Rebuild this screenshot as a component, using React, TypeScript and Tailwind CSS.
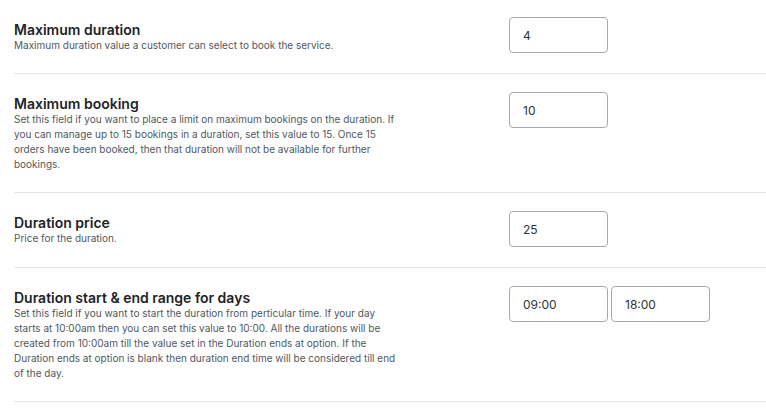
import React from "react";

type Field = {
  title: string;
  desc: string;
  values: string[];
};

const fields: Field[] = [
  {
    title: "Maximum duration",
    desc: "Maximum duration value a customer can select to book the service.",
    values: ["4"],
  },
  {
    title: "Maximum booking",
    desc: "Set this field if you want to place a limit on maximum bookings on the duration. If you can manage up to 15 bookings in a duration, set this value to 15. Once 15 orders have been booked, then that duration will not be available for further bookings.",
    values: ["10"],
  },
  {
    title: "Duration price",
    desc: "Price for the duration.",
    values: ["25"],
  },
  {
    title: "Duration start & end range for days",
    desc: "Set this field if you want to start the duration from perticular time. If your day starts at 10:00am then you can set this value to 10:00. All the durations will be created from 10:00am till the value set in the Duration ends at option. If the Duration ends at option is blank then duration end time will be considered till end of the day.",
    values: ["09:00", "18:00"],
  },
];

export default function App() {
  return (
    <div className="bg-white min-h-screen pl-[14px] font-['Inter',sans-serif] antialiased">
      {fields.map((f, i) => (
        <div
          key={f.title}
          className={`flex border-b border-[#e5e5e5] pb-[20px] ${i === 0 ? "pt-[17px]" : "pt-[18px]"}`}
        >
          {/* Label */}
          <div className={`w-[495px] shrink-0 ${i === 0 ? "pt-[4px]" : "pt-[3px]"}`}>
            <h2 className="text-[14px] leading-[18px] font-semibold text-[#1d2327]">{f.title}</h2>
            <p className="w-[384px] -mt-px text-[10px] leading-[15px] text-[#50575e]">{f.desc}</p>
          </div>

          {/* Inputs */}
          <div className="flex gap-[3px]">
            {f.values.map((v) => (
              <input
                key={v}
                type="text"
                defaultValue={v}
                className="w-[99px] h-[36px] rounded-[4px] border border-[#a7aaad] px-[13px] text-[12px] text-[#2c3338] outline-none"
              />
            ))}
          </div>
        </div>
      ))}
    </div>
  );
}
